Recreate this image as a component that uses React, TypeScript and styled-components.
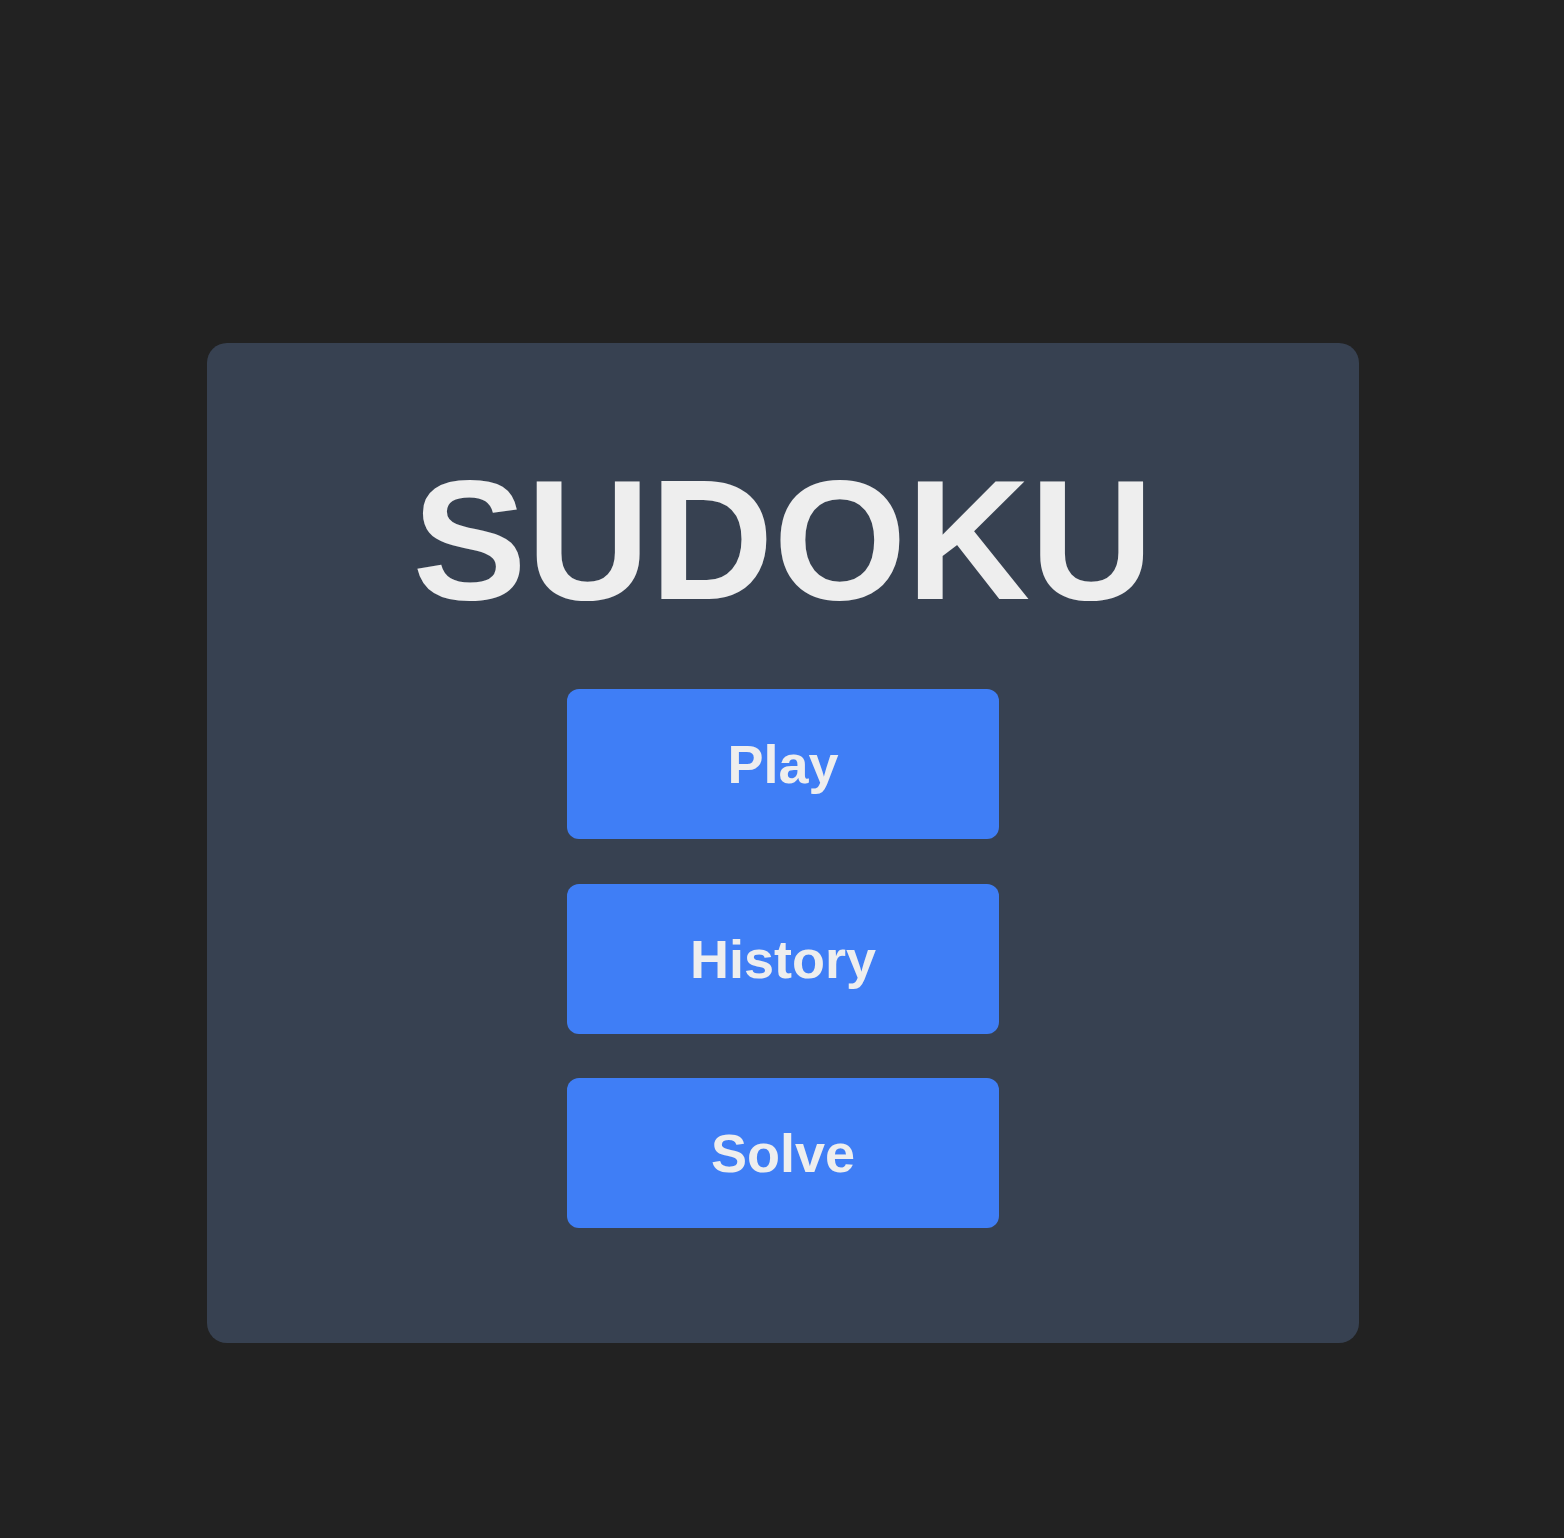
import styled, { createGlobalStyle } from 'styled-components';

const GlobalStyle = createGlobalStyle`
  html,
  body {
    margin: 0;
    padding: 0;
    background: #222222;
    font-family: 'Liberation Sans', Arial, sans-serif;
  }
`;

const StyledPage = styled.main`
  min-height: 1538px;
  display: flex;
  justify-content: center;
  align-items: flex-start;
  padding: 343px 0 0 2px;
  box-sizing: border-box;
`;

const StyledCard = styled.section`
  width: 1152px;
  height: 1000px;
  box-sizing: border-box;
  padding-top: 98px;
  background: #374151;
  border-radius: 20px;
  display: flex;
  flex-direction: column;
  align-items: center;
`;

const StyledTitle = styled.h1`
  margin: 0 0 51px;
  font-size: 171px;
  font-weight: 700;
  line-height: normal;
  color: #eeeeee;
`;

const StyledMenu = styled.nav`
  display: flex;
  flex-direction: column;
  gap: 44.5px;
`;

const StyledButton = styled.button`
  width: 432px;
  height: 150px;
  border: none;
  border-radius: 12px;
  background: #3f7ef6;
  color: #eeeeee;
  font-family: inherit;
  font-size: 54px;
  font-weight: 700;
  cursor: pointer;

  &:hover {
    background: #356fe0;
  }
`;

const options = ['Play', 'History', 'Solve'];

export default function App() {
  return (
    <>
      <GlobalStyle />
      <StyledPage>
        <StyledCard>
          <StyledTitle>SUDOKU</StyledTitle>
          <StyledMenu>
            {options.map((label) => (
              <StyledButton key={label} type="button">
                {label}
              </StyledButton>
            ))}
          </StyledMenu>
        </StyledCard>
      </StyledPage>
    </>
  );
}
